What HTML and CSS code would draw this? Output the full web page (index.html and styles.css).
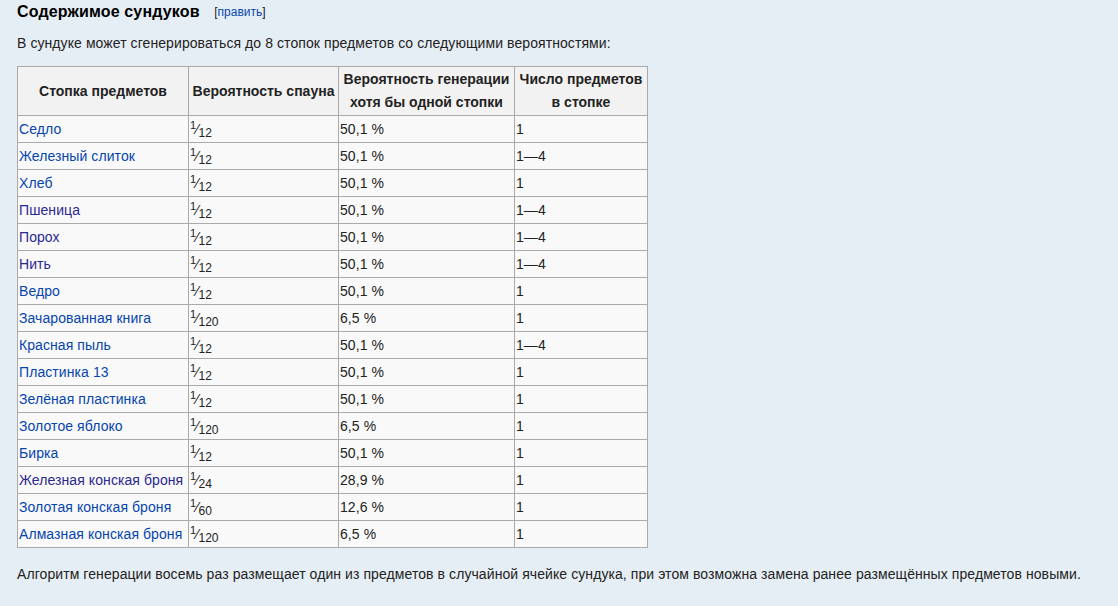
FILE: index.html
```html
<!DOCTYPE html>
<html lang="ru">
<head>
<meta charset="utf-8">
<title>Содержимое сундуков</title>
<link rel="stylesheet" href="styles.css">
</head>
<body>
<div class="content">
  <h2 class="section-title">Содержимое сундуков <span class="editsection">[<a href="#">править</a>]</span></h2>
  <p class="intro">В сундуке может сгенерироваться до 8 стопок предметов со следующими вероятностями:</p>
  <table class="wikitable">
    <colgroup>
      <col class="c1"><col class="c2"><col class="c3"><col class="c4">
    </colgroup>
    <thead>
      <tr>
        <th>Стопка предметов</th>
        <th>Вероятность спауна</th>
        <th>Вероятность генерации<br>хотя бы одной стопки</th>
        <th>Число предметов<br>в стопке</th>
      </tr>
    </thead>
    <tbody>
      <tr><td><a href="#">Седло</a></td><td><span class="frac"><sup>1</sup>⁄<sub>12</sub></span></td><td>50,1 %</td><td>1</td></tr>
      <tr><td><a href="#">Железный слиток</a></td><td><span class="frac"><sup>1</sup>⁄<sub>12</sub></span></td><td>50,1 %</td><td>1—4</td></tr>
      <tr><td><a href="#">Хлеб</a></td><td><span class="frac"><sup>1</sup>⁄<sub>12</sub></span></td><td>50,1 %</td><td>1</td></tr>
      <tr><td><a href="#" class="visited">Пшеница</a></td><td><span class="frac"><sup>1</sup>⁄<sub>12</sub></span></td><td>50,1 %</td><td>1—4</td></tr>
      <tr><td><a href="#" class="visited">Порох</a></td><td><span class="frac"><sup>1</sup>⁄<sub>12</sub></span></td><td>50,1 %</td><td>1—4</td></tr>
      <tr><td><a href="#" class="visited">Нить</a></td><td><span class="frac"><sup>1</sup>⁄<sub>12</sub></span></td><td>50,1 %</td><td>1—4</td></tr>
      <tr><td><a href="#">Ведро</a></td><td><span class="frac"><sup>1</sup>⁄<sub>12</sub></span></td><td>50,1 %</td><td>1</td></tr>
      <tr><td><a href="#">Зачарованная книга</a></td><td><span class="frac"><sup>1</sup>⁄<sub>120</sub></span></td><td>6,5 %</td><td>1</td></tr>
      <tr><td><a href="#">Красная пыль</a></td><td><span class="frac"><sup>1</sup>⁄<sub>12</sub></span></td><td>50,1 %</td><td>1—4</td></tr>
      <tr><td><a href="#">Пластинка 13</a></td><td><span class="frac"><sup>1</sup>⁄<sub>12</sub></span></td><td>50,1 %</td><td>1</td></tr>
      <tr><td><a href="#">Зелёная пластинка</a></td><td><span class="frac"><sup>1</sup>⁄<sub>12</sub></span></td><td>50,1 %</td><td>1</td></tr>
      <tr><td><a href="#">Золотое яблоко</a></td><td><span class="frac"><sup>1</sup>⁄<sub>120</sub></span></td><td>6,5 %</td><td>1</td></tr>
      <tr><td><a href="#">Бирка</a></td><td><span class="frac"><sup>1</sup>⁄<sub>12</sub></span></td><td>50,1 %</td><td>1</td></tr>
      <tr><td><a href="#" class="visited">Железная конская броня</a></td><td><span class="frac"><sup>1</sup>⁄<sub>24</sub></span></td><td>28,9 %</td><td>1</td></tr>
      <tr><td><a href="#">Золотая конская броня</a></td><td><span class="frac"><sup>1</sup>⁄<sub>60</sub></span></td><td>12,6 %</td><td>1</td></tr>
      <tr><td><a href="#">Алмазная конская броня</a></td><td><span class="frac"><sup>1</sup>⁄<sub>120</sub></span></td><td>6,5 %</td><td>1</td></tr>
    </tbody>
  </table>
  <p class="outro">Алгоритм генерации восемь раз размещает один из предметов в случайной ячейке сундука, при этом возможна замена ранее размещённых предметов новыми.</p>
</div>
</body>
</html>
```

FILE: styles.css
```css
html, body {
  margin: 0;
  padding: 0;
}
body {
  background: #e6eef5;
  color: #222222;
  font-family: "Liberation Sans", Arial, sans-serif;
  font-size: 14px;
  letter-spacing: 0.08px;
  width: 1118px;
  height: 606px;
  overflow: hidden;
}
a {
  color: #0645ad;
  text-decoration: none;
}
a.visited {
  color: #2b2890;
}
.content {
  padding: 0 17px;
}
.section-title {
  margin: 0;
  padding-top: 2px;
  font-size: 16px;
  font-weight: bold;
  line-height: 20px;
  color: #000;
  letter-spacing: 0.15px;
}
.editsection {
  font-size: 12px;
  font-weight: normal;
  margin-left: 10px;
  color: #222;
  vertical-align: 1px;
  letter-spacing: 0;
}
.intro {
  margin: 11px 0 0 0;
  line-height: 20px;
}
.wikitable {
  margin-top: 13px;
  border-collapse: collapse;
  background: #f9f9f9;
  border: 1px solid #aaaaaa;
  table-layout: fixed;
  width: 630px;
}
.c1 { width: 171px; }
.c2 { width: 150px; }
.c3 { width: 176px; }
.c4 { width: 133px; }
.wikitable th,
.wikitable td {
  border: 1px solid #aaaaaa;
  padding: 0 1px;
  text-align: left;
}
.wikitable th {
  background: #f2f2f2;
  text-align: center;
  font-size: 14px;
  letter-spacing: 0;
  line-height: 23px;
  height: 48px;
  padding: 0 1px;
  white-space: nowrap;
}
.wikitable td {
  height: 26px;
  line-height: 20px;
  white-space: nowrap;
}
.frac {
  white-space: nowrap;
  font-size: 14px;
  letter-spacing: 0;
}
.frac sup {
  font-size: 11px;
  vertical-align: 5px;
  line-height: 0;
}
.frac sub {
  font-size: 12px;
  vertical-align: -3px;
  line-height: 0;
}
.outro {
  margin: 16px 0 0 0;
  line-height: 20px;
}
```
